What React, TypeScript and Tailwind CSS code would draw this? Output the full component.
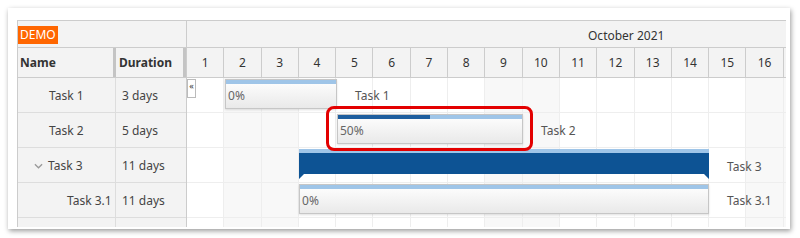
import React from 'react'

const DAY_W = 37.3
const DAYS = Array.from({ length: 17 }, (_, i) => i + 1)
const WEEKENDS = [2, 3, 9, 10, 16, 17]

const ROWS = [
  { name: 'Task 1', duration: '3 days', indent: 'pl-[31px]' },
  { name: 'Task 2', duration: '5 days', indent: 'pl-[31px]' },
  { name: 'Task 3', duration: '11 days', indent: 'pl-[16px]', group: true },
  { name: 'Task 3.1', duration: '11 days', indent: 'pl-[49px]' },
  { name: '', duration: '', indent: '' },
]

function Bar({ left, top, width, progress, label }: { left: number; top: number; width: number; progress: number; label: string }) {
  return (
    <div className="absolute flex items-center" style={{ left, top }}>
      <div
        className="relative h-[30px] border border-[#c6c6c6] bg-gradient-to-b from-white to-[#e9e9e9] shadow-[0_1px_2px_rgba(0,0,0,0.12)]"
        style={{ width }}
      >
        <div className="absolute left-0 right-0 top-0 h-[4px] bg-[#9fc5e8]">
          <div className="h-full bg-[#1f5f9f]" style={{ width: `${progress}%` }} />
        </div>
        <span className="absolute left-[2px] top-[8px] text-[12px] leading-[16px] text-[#666]">{progress}%</span>
      </div>
      <span className="ml-[18px] pt-[3px] text-[12px] text-[#555] whitespace-nowrap">{label}</span>
    </div>
  )
}

export default function App() {
  return (
    <div className="w-[800px] h-[238px] bg-white pt-[8px] pl-[8px] font-['Segoe_UI','Noto_Sans',sans-serif] text-[#333] overflow-hidden">
      <div className="w-[782px] h-[221px] bg-white shadow-[1px_2px_5px_rgba(0,0,0,0.4)] pt-[12px] pl-[9px]">

        {/* ── Gantt box ─────────────────────────────────────────── */}
        <div className="w-[769px] h-[207px] flex border-t border-l border-[#ccc] overflow-hidden">

          {/* Left pane */}
          <div className="w-[169px] shrink-0 bg-[#f3f3f3] border-r border-[#ccc] flex flex-col">
            <div className="h-[26px] shrink-0">
              <span className="inline-block bg-[#ff6600] text-white text-[12px] leading-[18px] px-[2px]">DEMO</span>
            </div>
            <div className="h-[31px] shrink-0 flex border-t border-b border-[#ccc] text-[12px] font-bold text-[#333]">
              <div className="w-[98px] flex items-center pl-[2px] border-r-[3px] border-[#c4c4c4]">Name</div>
              <div className="flex-1 flex items-center pl-[3px] border-r-[3px] border-[#c4c4c4]">Duration</div>
            </div>
            {ROWS.map((r, i) => (
              <div key={i} className="h-[35px] shrink-0 flex border-b border-[#ddd] text-[12px] text-[#444]">
                <div className={`w-[98px] flex items-center pt-[1px] border-r border-[#ddd] ${r.indent}`}>
                  {r.group && (
                    <svg viewBox="0 0 10 6" className="w-[9px] h-[6px] mr-[5px]" fill="none" stroke="#999" strokeWidth="1.4">
                      <polyline points="1,1 5,5 9,1" />
                    </svg>
                  )}
                  {r.name}
                </div>
                <div className="flex-1 flex items-center pt-[1px] pl-[6px]">{r.duration}</div>
              </div>
            ))}
          </div>

          {/* Right pane */}
          <div className="flex-1 min-w-0 flex flex-col overflow-hidden">
            <div className="h-[26px] shrink-0 bg-[#f3f3f3] flex items-center pl-[401px] pt-[3px] text-[12px] text-[#333] whitespace-nowrap">
              October 2021
            </div>
            <div className="h-[31px] shrink-0 flex bg-[#f3f3f3] border-t border-b border-[#ccc]">
              {DAYS.map(d => (
                <div
                  key={d}
                  className="shrink-0 flex items-center justify-center border-r border-[#ccc] text-[12px] text-[#333]"
                  style={{ width: DAY_W }}
                >
                  {d < 17 ? d : ''}
                </div>
              ))}
            </div>

            {/* Body */}
            <div className="relative flex-1">
              <div className="flex h-full">
                {DAYS.map(d => (
                  <div
                    key={d}
                    className={`shrink-0 h-full border-r border-[#eee] ${WEEKENDS.includes(d) ? 'bg-[#f8f8f8]' : 'bg-white'}`}
                    style={{ width: DAY_W }}
                  />
                ))}
              </div>
              <div className="absolute inset-0 flex flex-col">
                {ROWS.map((_, i) => (
                  <div key={i} className="h-[35px] shrink-0 border-b border-[#eee]" />
                ))}
              </div>

              {/* collapse button */}
              <div className="absolute left-0 top-[1px] w-[9px] h-[19px] bg-white border border-[#bbb] text-[9px] leading-[12px] text-[#333] flex justify-center">«</div>

              <Bar left={38} top={1} width={112} progress={0} label="Task 1" />
              <Bar left={150} top={36} width={186} progress={50} label="Task 2" />

              {/* Task 3 group */}
              <div className="absolute left-[112px] top-[71px] flex items-start">
                <div className="w-[410px]">
                  <div className="h-[4px] bg-[#9fc5e8]" />
                  <svg viewBox="0 0 410 26" width="410" height="26" className="block">
                    <polygon points="0,0 410,0 410,26 405,21 5,21 0,26" fill="#0d5394" />
                  </svg>
                </div>
                <span className="ml-[18px] pt-[9px] text-[12px] text-[#555]">Task 3</span>
              </div>

              <Bar left={112} top={106} width={410} progress={0} label="Task 3.1" />

              {/* highlight */}
              <div className="absolute left-[139px] top-[28px] w-[207px] h-[45px] border-[3px] border-[#e30000] rounded-[8px]" />
            </div>
          </div>
        </div>
      </div>
    </div>
  )
}
